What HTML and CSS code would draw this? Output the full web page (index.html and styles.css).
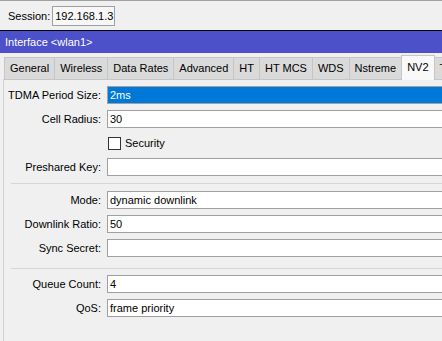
FILE: index.html
```html
<!DOCTYPE html>
<html lang="en">
<head>
    <meta charset="UTF-8">
    <title>Interface &lt;wlan1&gt;</title>
    <link rel="stylesheet" href="styles.css">
</head>
<body>
    <div class="session-bar">
        <span>Session:</span>
        <div class="session-box">192.168.1.3</div>
    </div>

    <div class="title">Interface &lt;wlan1&gt;</div>

    <div class="tabs">
        <div class="tab">General</div>
        <div class="tab">Wireless</div>
        <div class="tab">Data Rates</div>
        <div class="tab">Advanced</div>
        <div class="tab">HT</div>
        <div class="tab">HT MCS</div>
        <div class="tab">WDS</div>
        <div class="tab">Nstreme</div>
        <div class="tab active">NV2</div>
        <div class="tab">Tx Power</div>
    </div>

    <div class="panel">
        <div class="row">
            <label>TDMA Period Size:</label>
            <div class="field selected">2ms</div>
        </div>
        <div class="row">
            <label>Cell Radius:</label>
            <div class="field">30</div>
        </div>
        <div class="row">
            <label></label>
            <div class="check"><span class="box"></span>Security</div>
        </div>
        <div class="row">
            <label>Preshared Key:</label>
            <div class="field"></div>
        </div>

        <div class="sep"></div>

        <div class="row">
            <label>Mode:</label>
            <div class="field">dynamic downlink</div>
        </div>
        <div class="row">
            <label>Downlink Ratio:</label>
            <div class="field">50</div>
        </div>
        <div class="row">
            <label>Sync Secret:</label>
            <div class="field"></div>
        </div>

        <div class="sep low"></div>

        <div class="row">
            <label>Queue Count:</label>
            <div class="field">4</div>
        </div>
        <div class="row">
            <label>QoS:</label>
            <div class="field">frame priority</div>
        </div>
    </div>
</body>
</html>
```

FILE: styles.css
```css
body {
    margin: 0;
    width: 480px;
    height: 341px;
    overflow: hidden;
    font-family: "Liberation Sans", Arial, sans-serif;
    font-size: 11px;
    color: #000;
    background-color: #f0f0f0;
}
.session-bar {
    height: 29px;
    border-top: 1px solid #a0a0a0;
    border-bottom: 1px solid #000;
    display: flex;
    align-items: center;
    gap: 2px;
    padding-left: 8px;
}
.session-box {
    height: 18px;
    line-height: 18px;
    padding: 0 1px 0 2px;
    border: 1px solid #a0a0a0;
    background-color: #f7f7f7;
}
.title {
    height: 22px;
    line-height: 22px;
    padding-left: 5px;
    background-color: #4c50c9;
    color: #fff;
}
.tabs {
    display: flex;
    align-items: flex-end;
    height: 24px;
    margin-top: 2px;
    padding-left: 4px;
    position: relative;
    z-index: 1;
}
.tab {
    height: 21px;
    line-height: 21px;
    padding: 0 5px;
    border: 1px solid #c6c6c6;
    border-bottom: none;
    margin-right: -1px;
    background-color: #dadada;
    white-space: nowrap;
}
.tab.active {
    height: 24px;
    line-height: 23px;
    margin-bottom: -1px;
    background-color: #f9f9f9;
    border-color: #c6c6c6;
}
.panel {
    margin-left: 3px;
    height: 300px;
    padding-top: 6px;
    border-top: 1px solid #c6c6c6;
    border-left: 1px solid #d2d2d2;
}
.row {
    display: flex;
    height: 24px;
}
.row label {
    width: 97px;
    margin-right: 6px;
    height: 18px;
    line-height: 18px;
    text-align: right;
    flex-shrink: 0;
}
.field {
    flex: 1;
    box-sizing: border-box;
    height: 18px;
    line-height: 16px;
    padding-left: 2px;
    border: 1px solid #a0a0a0;
    background-color: #fff;
}
.field.selected {
    background-color: #0078d7;
    color: #fff;
}
.check {
    display: flex;
    align-items: center;
    height: 18px;
    padding-left: 1px;
}
.box {
    width: 11px;
    height: 11px;
    margin-right: 4px;
    border: 1px solid #333;
    background-color: #fff;
}
.sep {
    height: 1px;
    margin: 1px 0 7px 7px;
    background-color: #d6d6d6;
}
.sep.low {
    margin-top: 5px;
    margin-bottom: 6px;
}
```
